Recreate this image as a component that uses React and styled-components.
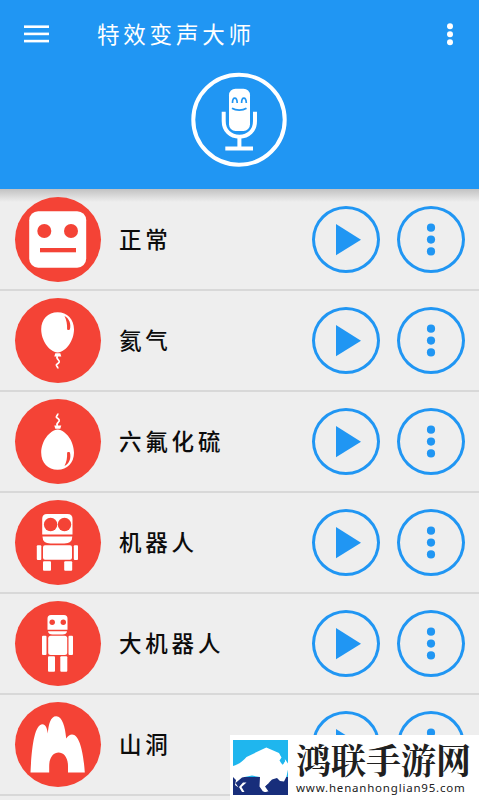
import React from "react";
import styled, { createGlobalStyle } from "styled-components";

const COLORS = {
  primary: "#2096f3",
  accent: "#f44336",
  background: "#eeeeee",
  divider: "#d8d8d8",
  text: "#0c0c0c",
};

const EFFECTS = [
  { name: "正常", Icon: FaceIcon },
  { name: "氦气", Icon: BalloonIcon },
  { name: "六氟化硫", Icon: HeavyBalloonIcon },
  { name: "机器人", Icon: RobotIcon },
  { name: "大机器人", Icon: BigRobotIcon },
  { name: "山洞", Icon: CaveIcon },
];

function App() {
  return (
    <Screen>
      <GlobalStyle />
      <Header>
        <Toolbar>
          <MenuButton aria-label="menu">
            <svg width="25" height="18" viewBox="0 0 25 18" fill="white">
              <rect y="0.4" width="25" height="2.6" />
              <rect y="7.6" width="25" height="2.6" />
              <rect y="14.8" width="25" height="2.6" />
            </svg>
          </MenuButton>
          <Title>特效变声大师</Title>
          <MoreButton aria-label="more">
            <svg width="8" height="24" viewBox="0 0 8 24" fill="white">
              <circle cx="4" cy="4.3" r="3" />
              <circle cx="4" cy="12.3" r="3" />
              <circle cx="4" cy="20.3" r="3" />
            </svg>
          </MoreButton>
        </Toolbar>
        <Microphone />
      </Header>
      <List>
        {EFFECTS.map(({ name, Icon }) => (
          <Row key={name}>
            <Avatar>
              <Icon />
            </Avatar>
            <Name>{name}</Name>
            <RoundButton aria-label="play">
              <svg width="62" height="62" viewBox="0 0 62 62">
                <path d="M21 15 46 30.7 21 46.3z" fill={COLORS.primary} />
              </svg>
            </RoundButton>
            <RoundButton aria-label="options">
              <svg width="62" height="62" viewBox="0 0 62 62" fill={COLORS.primary}>
                <circle cx="31" cy="18.7" r="4.1" />
                <circle cx="31" cy="30.6" r="4.1" />
                <circle cx="31" cy="42.4" r="4.1" />
              </svg>
            </RoundButton>
          </Row>
        ))}
      </List>
      <Watermark>
        <BisonLogo />
        <Brand>
          <BrandName>鸿联手游网</BrandName>
          <BrandUrl>www.henanhonglian95.com</BrandUrl>
        </Brand>
      </Watermark>
    </Screen>
  );
}

function Microphone() {
  return (
    <MicSvg width="96" height="96" viewBox="0 0 96 96" fill="none">
      <ellipse cx="48" cy="47.7" rx="45.7" ry="45" stroke="white" strokeWidth="4" />
      <rect x="38" y="16.7" width="21" height="42.3" rx="6.5" fill="white" />
      <path
        d="M32.7 39.7V49c0 9.5 6.5 15.7 15.7 15.7S64 58.5 64 49v-9.3M48.4 65v10"
        stroke="white"
        strokeWidth="4"
      />
      <path d="M34.3 76.5H62" stroke="white" strokeWidth="4" />
      <path
        d="M41.5 31c0-6.5 4.5-6.5 4.7 0M50.6 31c0-6.5 4.5-6.5 4.7 0M41 36.2c4 2.6 10.500 2.600 14.500 0"
        stroke={COLORS.primary}
        strokeWidth="1.7"
      />
    </MicSvg>
  );
}

function FaceIcon() {
  return (
    <svg width="86" height="85" viewBox="0 0 86 85">
      <rect x="14.2" y="14.2" width="57" height="56.5" rx="9" fill="white" />
      <g fill={COLORS.accent}>
        <circle cx="29.3" cy="34" r="7" />
        <circle cx="56" cy="34" r="7" />
        <rect x="25" y="51" width="36" height="4.3" />
      </g>
    </svg>
  );
}

function BalloonShape() {
  return (
    <>
      <path
        d="M42.600 14.200c9.600 0 16.400 7 16.400 17 0 11-7.500 22.300-16.300 23.300-8.800-1-16.500-12.300-16.500-23.300 0-10 6.800-17 16.400-17z"
        fill="white"
      />
      <path d="M40.300 55.200h5l1 3.300h-7z" fill="white" />
      <path
        d="M42.500 58c-2.500 3.200 3 3.600 1.600 6.200-1.500 2.300-3.800 1.800-2.200 4 1 1.300 1.100 1.200.8 2.300"
        fill="none"
        stroke="white"
        strokeWidth="1.7"
      />
      <path
        d="M49.500 18c4.800 2.400 6.900 8 5.400 13.600-1 .6-2.800.5-2.800-.6.200-5-.6-9-2.600-13z"
        fill={COLORS.accent}
      />
    </>
  );
}

function BalloonIcon() {
  return (
    <svg width="86" height="85" viewBox="0 0 86 85">
      <BalloonShape />
    </svg>
  );
}

function HeavyBalloonIcon() {
  return (
    <svg width="86" height="85" viewBox="0 0 86 85">
      <g transform="matrix(1 0 0 -1 0 85)">
        <BalloonShape />
      </g>
    </svg>
  );
}

function RobotIcon() {
  return (
    <svg width="86" height="85" viewBox="0 0 86 85" fill="white">
      <path d="M32 14h20.5q5 0 5 5v15.500H27.200V19q0-5 4.800-5z" />
      <path d="M27.500 36.500h29.800q0 7-8 7H35.500q-8 0-8-7z" />
      <rect x="28" y="45.3" width="29" height="14.4" rx="2" />
      <rect x="21.8" y="45.3" width="4.5" height="14.7" rx="1" />
      <rect x="58.8" y="45.3" width="4.2" height="14.7" rx="1" />
      <rect x="28" y="61.3" width="8" height="9.5" rx="1" />
      <rect x="49.2" y="61.3" width="8" height="9.5" rx="1" />
      <circle cx="35.6" cy="24.5" r="6.7" fill={COLORS.accent} />
      <circle cx="49.5" cy="24.5" r="6.7" fill={COLORS.accent} />
    </svg>
  );
}

function BigRobotIcon() {
  return (
    <svg width="86" height="85" viewBox="0 0 86 85" fill="white">
      <path d="M35.500 14h13.500q3.500 0 3.500 3.500v11.300h-20V17.500q0-3.500 3.500-3.500z" />
      <path d="M33 30.200h19q-.5 3.300-4.500 3.300H37.500q-4 0-4.500-3.300z" />
      <rect x="33.2" y="34.8" width="19" height="19.2" rx="2.5" />
      <rect x="27" y="34.8" width="4.5" height="19.2" rx="1" />
      <rect x="53.5" y="34.8" width="4.5" height="19.2" rx="1" />
      <rect x="33" y="55.2" width="7" height="15.6" rx="1" />
      <rect x="45.3" y="55.2" width="7" height="15.6" rx="1" />
      <circle cx="37.2" cy="21.2" r="2.7" fill={COLORS.accent} />
      <circle cx="48.3" cy="21.2" r="2.7" fill={COLORS.accent} />
    </svg>
  );
}

function CaveIcon() {
  return (
    <svg width="86" height="85" viewBox="0 0 86 85">
      <path
        d="M15.500 70.500C16.500 48 19 22.200 27.500 22.200c3 0 4.500 3.500 5.300 9.300.7-9 2.700-17.300 8.400-17.300 6 0 9 10.500 10 22.300 1.800-2.500 3.800-3.900 5.800-3.900 7.500 0 11.500 18 12.800 37.900H53V64c0-18-18.800-18-18.800 0v6.500z"
        fill="white"
      />
    </svg>
  );
}

function BisonLogo() {
  return (
    <svg width="55" height="55" viewBox="0 0 55 55">
      <rect width="55" height="55" fill="#1fb6ee" />
      <path d="M0 37h55v18H0z" fill="#182e7b" />
      <path
        d="M0 26C6 24.500 10 21 13.500 17L33.300 7.400 46 13l2.500 4.500-2 3 3 4.200 2.500-3.200-.5-3 3.500 5v6l-1.500 7-2.500 5-4-.5-3-3-5 1.500-7 7 3.500 5h-5.500l-3.500-5 .5-9.500-8-1.500-10 2-6.500 5.500 3 4.500H5.500L2 45l1-5-3-3z"
        fill="white"
      />
      <path d="m13.500 42.500-5 4.500 3 5H9l-3-5 4-4.500zM36.500 42.500l-6 4.500 3.500 5h-2.500l-3.500-5 5-4.500z" fill="white" />
      <path d="M47.500 10q-1.500 4 1.500 7 1 3-1.500 5l2.500 2.500 2-4-1.500-5-2-2z" fill="#1fb6ee" />
    </svg>
  );
}

const GlobalStyle = createGlobalStyle`
  body {
    margin: 0;
    background: white;
  }
`;

const Screen = styled.main`
  position: relative;
  width: 479px;
  height: 800px;
  overflow: hidden;
  background: ${COLORS.background};
  font-family: KaiTi, "AR PL UKai CN", "Noto Sans CJK SC", sans-serif;
`;

const Header = styled.header`
  display: flex;
  flex-direction: column;
  align-items: center;
  box-sizing: border-box;
  height: 189px;
  background: ${COLORS.primary};
`;

const Toolbar = styled.div`
  display: flex;
  align-items: center;
  box-sizing: border-box;
  width: 100%;
  height: 68px;
  padding: 0 25px 0 24px;
`;

const IconButton = styled.button`
  display: flex;
  align-items: center;
  justify-content: center;
  padding: 0;
  border: none;
  background: none;
`;

const MenuButton = styled(IconButton)`
  width: 25px;
`;

const MoreButton = styled(IconButton)`
  width: 8px;
  margin-left: auto;
`;

const Title = styled.h1`
  margin: 0 0 3px 48px;
  color: white;
  font-size: 22.5px;
  font-weight: 400;
  line-height: 32px;
  letter-spacing: 3.8px;
`;

const MicSvg = styled.svg`
  margin: 4px 1px 0 0;
`;

/* the gradient is the shadow that the header casts */
const List = styled.ul`
  margin: 0;
  padding: 1px 0 0;
  list-style: none;
  background: linear-gradient(#c2c2c2, ${COLORS.background}) no-repeat;
  background-size: 100% 13px;
`;

const Row = styled.li`
  display: flex;
  align-items: center;
  box-sizing: border-box;
  height: 101px;
  padding: 0 14px 0 15px;
  border-bottom: 2px solid ${COLORS.divider};
`;

const Avatar = styled.div`
  flex-shrink: 0;
  width: 86px;
  height: 85px;
  border-radius: 50%;
  background: ${COLORS.accent};
`;

const Name = styled.span`
  flex: 1;
  margin: 0 0 3px 18px;
  color: ${COLORS.text};
  font-size: 22.5px;
  font-weight: 500;
  line-height: 32px;
  letter-spacing: 3.8px;
  white-space: nowrap;
`;

const RoundButton = styled(IconButton)`
  box-sizing: border-box;
  width: 68px;
  height: 67px;
  border: 3px solid ${COLORS.primary};
  border-radius: 50%;

  & + & {
    margin-left: 17px;
  }
`;

const Watermark = styled.aside`
  position: absolute;
  right: -1px;
  bottom: 0;
  display: flex;
  box-sizing: border-box;
  width: 250px;
  height: 65px;
  padding: 5px 0 0 3px;
  background: white;
`;

const Brand = styled.div`
  display: flex;
  flex-direction: column;
  margin-left: 8px;
  color: #202020;
`;

const BrandName = styled.strong`
  height: 41px;
  font-family: "Noto Serif CJK SC", "Noto Sans CJK SC", serif;
  font-size: 35px;
  font-weight: 700;
  line-height: 38px;
  white-space: nowrap;
`;

const BrandUrl = styled.span`
  font-family: "Noto Sans", sans-serif;
  font-size: 11.5px;
  line-height: 13px;
  letter-spacing: 0.8px;
`;

export default App;
